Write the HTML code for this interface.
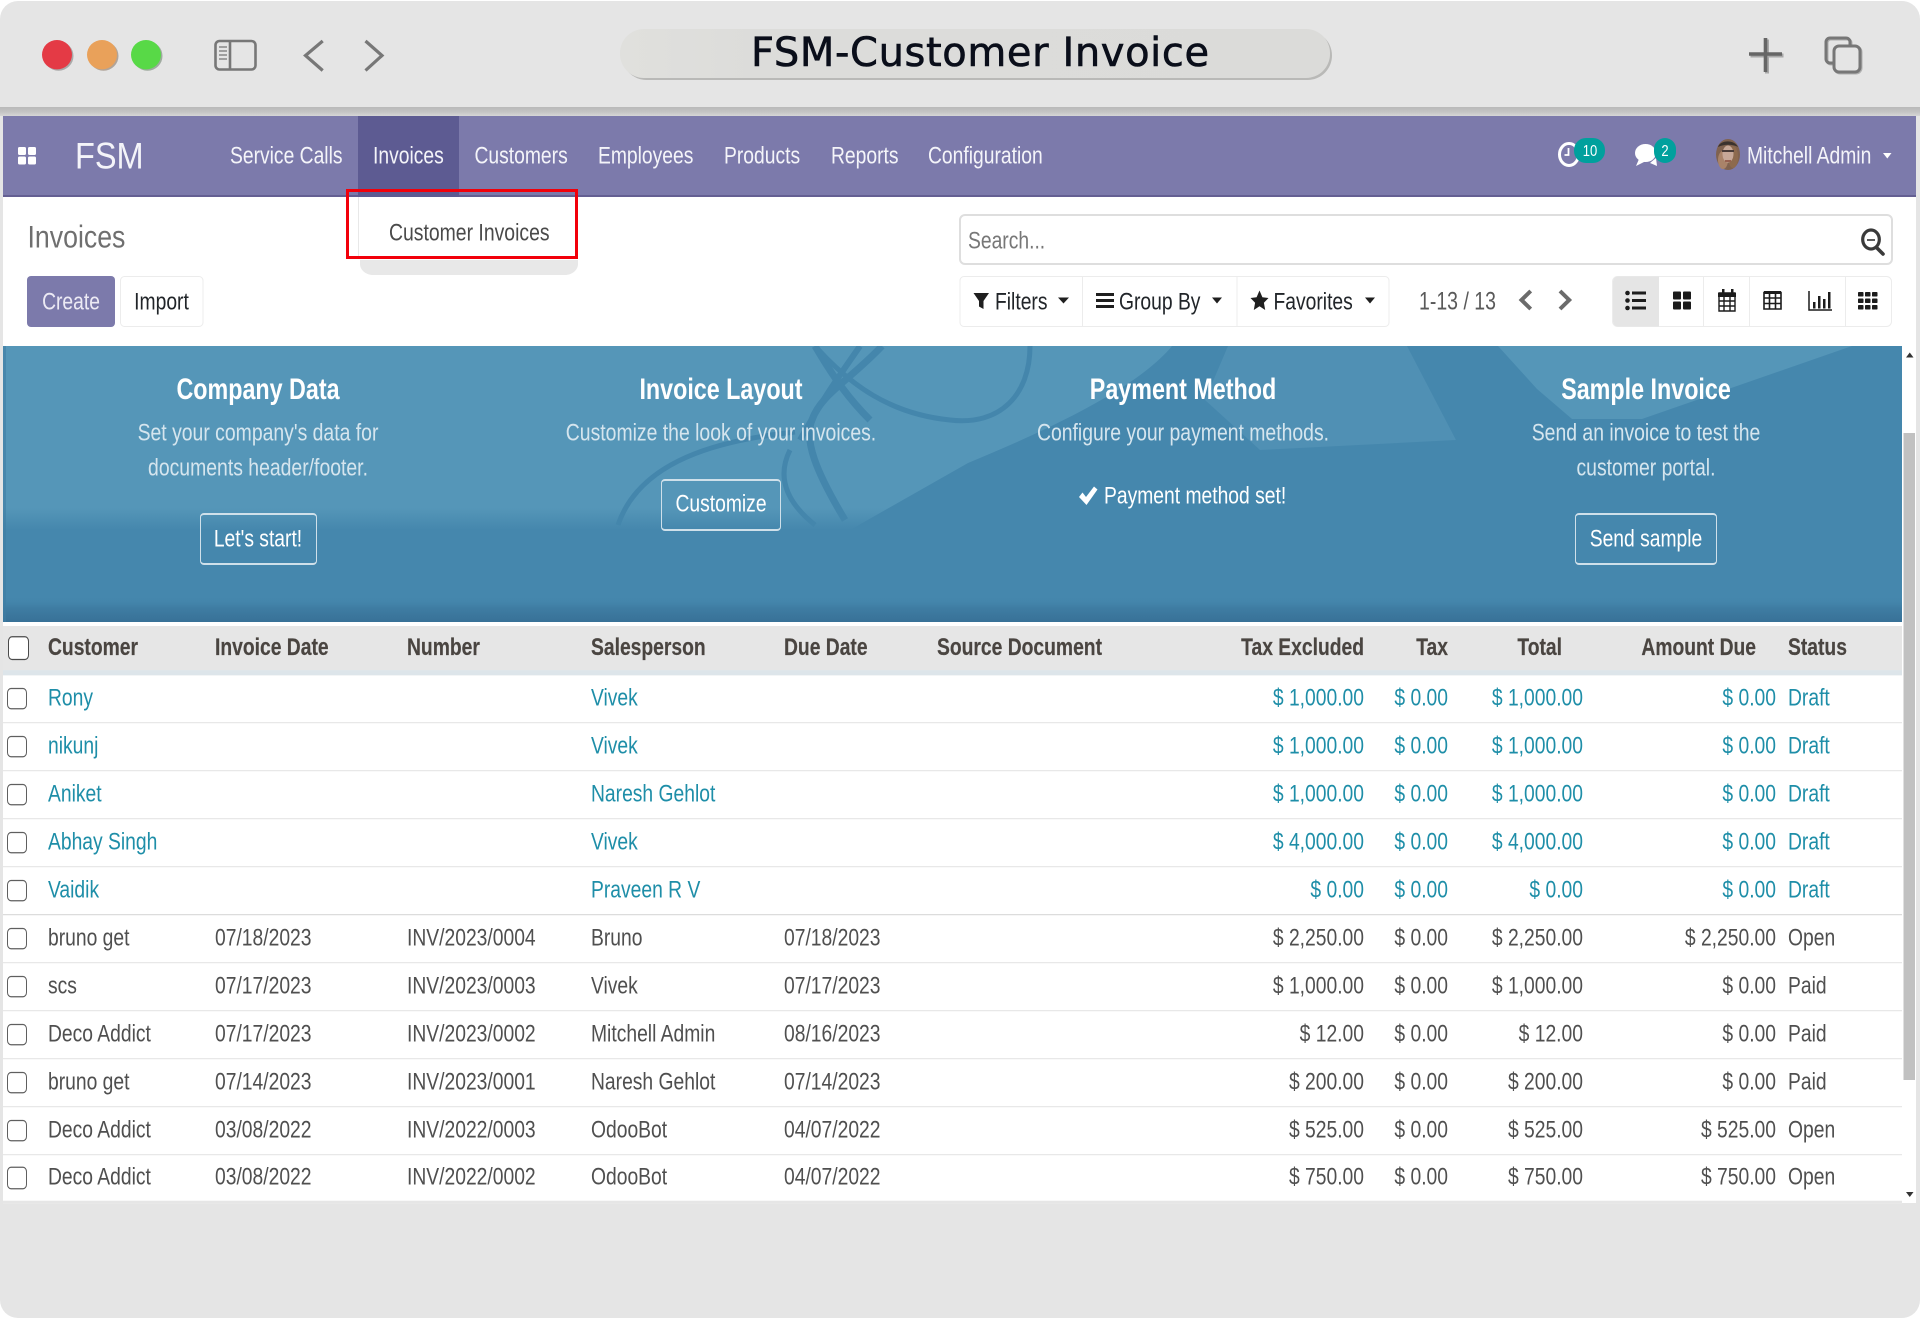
<!DOCTYPE html>
<html lang="en">
<head>
<meta charset="utf-8">
<title>FSM-Customer Invoice</title>
<style>
html,body{margin:0;padding:0;background:#fff;width:1920px;height:1320px;overflow:hidden}
body{position:relative;font-family:"Liberation Sans",sans-serif;color:#4c4c4c}
#win{position:absolute;left:0;top:1px;width:1920px;height:1317px;background:#e5e5e5;border-radius:18px}
svg.ov{position:absolute;left:0;top:0}
.t{position:absolute;white-space:nowrap;font-size:19.3px;line-height:24px;transform:scaleY(var(--s,1.263));transform-origin:0 50%}
.c{transform:translateX(-50%) scaleY(var(--s,1.263))}
.n{color:#f4f4f9}
.h{font-weight:bold;font-size:23.3px;color:#fff}
.p{color:#d5e5ee;font-size:19.4px}
.w{color:#fff}
.k{color:#212529}
.bb{position:absolute;box-sizing:border-box;border:1px solid #cfe0ea;border-top-width:2px;border-bottom-width:2px;border-radius:4px}
#tb{position:absolute;left:3px;top:625.5px;width:1899px;transform:scaleY(1.26316);transform-origin:0 0}
table{border-collapse:separate;border-spacing:0;table-layout:fixed;width:1899px;font-size:19.3px;background:#fff}
th,td{box-sizing:border-box;padding:0 8px;white-space:nowrap;overflow:hidden;text-align:left;vertical-align:middle;font-weight:normal}
th{height:39px;background:#e6e6e6;font-weight:bold;color:#4a4541;border-bottom:4px solid #dde5ea;-webkit-text-stroke:.15px #4a4541}
td{height:38px;border-bottom:1px solid #e8e8e8;color:#4f4f4f}
tr.l td{color:#1e8ea8}
tr:last-child td{border-bottom:2px solid #e6e6e6}
tr.e td{border-bottom-color:#dcdcdc}
th.r,td.r{text-align:right}
.cb{display:block;box-sizing:border-box;width:20px;height:17.4px;border:1.4px solid #5f5f5f;border-radius:4px;background:#fff}
th .cb{width:21px;height:19px;border-color:#4a4a4a;margin-left:.5px}
.am{padding-right:4px}
.ck{padding:0 0 0 4px}
</style>
</head>
<body>
<div id="win"></div>

<svg class="ov" width="1920" height="1320" viewBox="0 0 1920 1320">
<defs>
<linearGradient id="barg" x1="0" y1="0" x2="0" y2="1"><stop offset="0" stop-color="#b9b9b9"/><stop offset=".55" stop-color="#c4c4c4"/><stop offset="1" stop-color="#d6d6d6"/></linearGradient>
<linearGradient id="pill" x1="0" y1="0" x2="1" y2="0"><stop offset="0" stop-color="#e0e0dd"/><stop offset=".2" stop-color="#dcdcda"/><stop offset="1" stop-color="#dbdbd9"/></linearGradient>
<linearGradient id="bot" x1="0" y1="0" x2="0" y2="1"><stop offset="0" stop-color="#4587ad" stop-opacity="0"/><stop offset=".45" stop-color="#3f7da3"/><stop offset="1" stop-color="#387197"/></linearGradient>
<linearGradient id="fade" gradientUnits="userSpaceOnUse" x1="0" y1="346" x2="0" y2="530"><stop offset="0" stop-color="#5596b8"/><stop offset=".88" stop-color="#5596b8"/><stop offset="1" stop-color="#4587ad"/></linearGradient>
<clipPath id="bc"><rect x="3" y="346" width="1899" height="276"/></clipPath>
</defs>

<!-- window chrome -->
<rect x="0" y="107" width="1920" height="9" fill="url(#barg)"/>
<ellipse cx="58.5" cy="56" rx="15" ry="14.7" fill="#a9a9a9"/><ellipse cx="57" cy="54.7" rx="15" ry="14.7" fill="#e43a45"/>
<ellipse cx="103.5" cy="56" rx="15" ry="14.7" fill="#b0a49a"/><ellipse cx="102" cy="54.7" rx="15" ry="14.7" fill="#e9a15a"/>
<ellipse cx="147.5" cy="56" rx="15" ry="14.7" fill="#9fab9f"/><ellipse cx="146" cy="54.7" rx="15" ry="14.7" fill="#58d947"/>
<rect x="215.5" y="41" width="40" height="28.5" rx="4" fill="none" stroke="#777" stroke-width="2.6"/>
<path d="M230 41v28.5" stroke="#777" stroke-width="2.6"/>
<path d="M219 47h8M219 51h8M219 55h8M219 59h8" stroke="#888" stroke-width="1.6"/>
<path d="M322.7 41 305.5 55.5 322.7 70.5" fill="none" stroke="#777" stroke-width="3.2"/>
<path d="M365.5 41 382 55.5 365.5 70.5" fill="none" stroke="#777" stroke-width="3.2"/>
<rect x="622" y="31" width="710" height="49" rx="24.5" fill="#b9b9b7"/>
<rect x="620" y="29" width="710" height="49" rx="24" fill="url(#pill)"/>
<path d="M1749 54h33M1765.5 38v34" stroke="#a8a8a8" stroke-width="4" transform="translate(1.5 1.5)"/>
<path d="M1749 54h33M1765.5 38v34" stroke="#666" stroke-width="3.6"/>
<rect x="1827" y="39" width="24" height="25" rx="4" fill="none" stroke="#b0b0b0" stroke-width="3"/>
<rect x="1835" y="47" width="26" height="26" rx="5" fill="none" stroke="#b0b0b0" stroke-width="3"/>
<rect x="1826" y="38" width="24" height="25" rx="4" fill="none" stroke="#777" stroke-width="3"/>
<rect x="1834" y="46" width="26" height="26" rx="5" fill="#e5e5e5" stroke="#777" stroke-width="3"/>

<!-- app surfaces -->
<rect x="3" y="116" width="1913" height="230" fill="#fff"/>
<rect x="1902" y="346" width="14" height="857" fill="#fff"/>
<rect x="3" y="622" width="1899" height="4" fill="#fff"/>
<rect x="3" y="116" width="1913" height="81" fill="#7c7aab"/>
<rect x="3" y="195" width="1913" height="2" fill="#645f92"/>
<rect x="358" y="116" width="101" height="81" fill="#5d5b92"/>
<rect x="18" y="147" width="8" height="8" rx="1.5" fill="#fff"/><rect x="28" y="147" width="8" height="8" rx="1.5" fill="#fff"/>
<rect x="18" y="156.5" width="8" height="8" rx="1.5" fill="#fff"/><rect x="28" y="156.5" width="8" height="8" rx="1.5" fill="#fff"/>

<!-- systray -->
<ellipse cx="1569" cy="154.5" rx="9.5" ry="11" fill="none" stroke="#fff" stroke-width="3"/>
<path d="M1568.5 148v7h-4" fill="none" stroke="#fff" stroke-width="1.8"/>
<rect x="1574" y="138" width="31" height="25" rx="12" fill="#00a09d"/>
<ellipse cx="1645.5" cy="153" rx="10.5" ry="9" fill="#fff"/>
<path d="M1639 159 1636 166 1646 161Z" fill="#fff"/>
<path d="M1650 163 1657 166 1656 158Z" fill="#fff"/>
<rect x="1654" y="138" width="22" height="25" rx="11" fill="#00a09d"/>
<ellipse cx="1728" cy="154.5" rx="12" ry="15.5" fill="#80624f"/>
<ellipse cx="1723" cy="160" rx="5" ry="9" fill="#a98369"/>
<ellipse cx="1733" cy="157" rx="5" ry="11" fill="#8d6a4e"/>
<ellipse cx="1728" cy="154" rx="5.5" ry="8.5" fill="#c7a898"/>
<path d="M1718 147c2-7 16-8 20 0-5-3-14-3-20 0Z" fill="#3a322e"/>
<path d="M1722 151h12" stroke="#4a3c38" stroke-width="2"/>
<path d="M1725 161h6" stroke="#96604f" stroke-width="2"/>
<path d="M1883 153h8.5l-4.2 5.5Z" fill="#fff"/>

<!-- control panel -->
<rect x="358" y="197" width="1" height="62" fill="#e8e8e8"/>
<path d="M360 260H578V264C578 270 572 275 565 275H373C366 275 360 270 360 264Z" fill="#e8e8e8"/>
<rect x="347.5" y="190.5" width="229" height="67" fill="none" stroke="#f2000a" stroke-width="3"/>
<rect x="27" y="276" width="88" height="51" rx="4" fill="#7c7aab"/>
<rect x="120.5" y="276.5" width="82.5" height="50" rx="4" fill="#fff" stroke="#ececec"/>
<rect x="960" y="215" width="932" height="49" rx="5" fill="#fff" stroke="#dedede" stroke-width="2"/>
<ellipse cx="1871" cy="239.5" rx="8.3" ry="9.5" fill="none" stroke="#3a3a3a" stroke-width="3.2"/>
<path d="M1877 248 1883 254" stroke="#3a3a3a" stroke-width="3.6" stroke-linecap="round"/>
<path d="M1867 240h8" stroke="#4a4a4a" stroke-width="1.8"/>

<rect x="960" y="276.5" width="429" height="50" rx="4" fill="#fff" stroke="#ececec"/>
<path d="M1082.5 276.5v50M1237 276.5v50" stroke="#ececec"/>
<path d="M973.5 293H989L983.5 301V309L979 306.5V301Z" fill="#1f1f1f"/>
<path d="M1058 297.5h11l-5.5 6Z" fill="#1f1f1f"/>
<path d="M1096 294.5h18M1096 300.5h18M1096 306.5h18" stroke="#1f1f1f" stroke-width="3"/>
<path d="M1212 297.5h10l-5 6Z" fill="#1f1f1f"/>
<path d="M1259.5 290.5l2.9 6.8 6.1.7-4.6 4.8 1.3 7.2-5.700-3.800-5.700 3.800 1.300-7.200-4.600-4.800 6.100-.7Z" fill="#1f1f1f"/>
<path d="M1365 297.5h10l-5 6Z" fill="#1f1f1f"/>
<path d="M1530.7 291 1521.5 300 1530.7 309" fill="none" stroke="#6b6b6b" stroke-width="4"/>
<path d="M1560 291 1569.2 300 1560 309" fill="none" stroke="#6b6b6b" stroke-width="4"/>

<rect x="1612.5" y="276.5" width="279" height="50" rx="5" fill="#fff" stroke="#ececec"/>
<path d="M1613 281a5 5 0 0 1 4-4.500H1659V326.500H1617a5 5 0 0 1-4-4.500Z" fill="#e5e5e5"/>
<path d="M1703.5 276.5v50M1749.5 276.5v50M1845.5 276.5v50" stroke="#ececec"/>
<g fill="#1c1c1c">
<circle cx="1627.5" cy="293" r="2.3"/><circle cx="1627.5" cy="300.5" r="2.3"/><circle cx="1627.5" cy="308" r="2.3"/>
<rect x="1632" y="291.5" width="14" height="3"/><rect x="1632" y="299" width="14" height="3"/><rect x="1632" y="306.5" width="14" height="3"/>
<rect x="1673" y="291.5" width="8" height="8" rx="1"/><rect x="1683" y="291.5" width="8" height="8" rx="1"/>
<rect x="1673" y="301.5" width="8" height="8" rx="1"/><rect x="1683" y="301.5" width="8" height="8" rx="1"/>
<rect x="1722" y="289" width="2.5" height="5"/><rect x="1731" y="289" width="2.5" height="5"/>
<rect x="1718" y="293" width="18" height="4"/>
</g>
<path d="M1719 293h16v18h-16ZM1719 301h16M1719 306h16M1724 297v14M1730 297v14" fill="none" stroke="#1c1c1c" stroke-width="1.4"/>
<path d="M1764 292.5h17v16.500h-17ZM1764 298h17M1764 303.5h17M1769.5 292.5v16.500M1775.5 292.5v16.500" fill="none" stroke="#1c1c1c" stroke-width="1.6"/>
<path d="M1764 292.5h17" stroke="#1c1c1c" stroke-width="3"/>
<path d="M1809 291v19h23" fill="none" stroke="#1c1c1c" stroke-width="1.5"/>
<g fill="#1c1c1c"><rect x="1813" y="302" width="2.5" height="6.5"/><rect x="1818" y="296" width="2.5" height="12.5"/><rect x="1823" y="299" width="2.5" height="9.5"/><rect x="1828" y="292" width="2.5" height="16.5"/></g>
<g fill="#1c1c1c">
<rect x="1858" y="292" width="5.5" height="4.5" rx=".8"/><rect x="1865" y="292" width="5.5" height="4.5" rx=".8"/><rect x="1872" y="292" width="5.5" height="4.5" rx=".8"/>
<rect x="1858" y="298.5" width="5.5" height="4.5" rx=".8"/><rect x="1865" y="298.5" width="5.5" height="4.5" rx=".8"/><rect x="1872" y="298.5" width="5.5" height="4.5" rx=".8"/>
<rect x="1858" y="305" width="5.5" height="4.5" rx=".8"/><rect x="1865" y="305" width="5.5" height="4.5" rx=".8"/><rect x="1872" y="305" width="5.5" height="4.5" rx=".8"/>
</g>

<!-- banner -->
<g clip-path="url(#bc)">
<rect x="3" y="346" width="1899" height="276" fill="#4587ad"/>
<path d="M3 346H1172C1140 385 1060 425 968 463L850 530H3Z" fill="url(#fade)"/>
<path d="M1228 346H1407L1456 440 1260 450 1205 400Z" fill="#5090b4"/>
<path d="M1498 346H1852L1642 419H1572L1537 389Z" fill="#5596b8"/>
<g fill="none" stroke="#4486ac" stroke-width="6">
<path d="M1030 346C1030 395 1000 426 950 420 890 414 850 385 815 346" stroke-width="5"/>
<path d="M882 346C850 380 820 395 812 420 804 440 815 470 845 520" stroke-width="7"/>
<path d="M815 346C835 380 850 400 870 420" stroke-width="7"/>
<path d="M860 346C840 375 825 395 800 440" stroke-width="6"/>
<path d="M795 432C720 440 640 460 618 525" stroke-width="5"/>
<path d="M790 450C775 480 790 505 815 525" stroke-width="5"/>
</g>
<rect x="3" y="596" width="1899" height="26" fill="url(#bot)"/>
<rect x="3" y="346" width="3" height="276" fill="#3f7da3" opacity=".6"/>
</g>

<!-- scrollbar -->
<rect x="1903.5" y="433" width="11.5" height="647" fill="#c1c1c1"/>
<path d="M1906 357.5h7.5l-3.750-5Z" fill="#333"/>
<path d="M1906 1192h7.5l-3.750 5Z" fill="#333"/>

<!-- check mark -->
<path d="M1079 497 1082.5 492.5 1086 497 1094 486.5 1097.5 489.5 1086.5 505Z" fill="#fff"/>
</svg>

<!-- title -->
<span class="t" style="left:751px;top:40.5px;font-family:'DejaVu Sans',sans-serif;font-size:40px;letter-spacing:.6px;color:#0a0e1a;-webkit-text-stroke:.6px #0a0e1a;--s:1">FSM-Customer Invoice</span>

<!-- nav -->
<span class="t n" style="left:75px;top:144px;font-size:32.5px;--s:1.150">FSM</span>
<span class="t n" style="left:230px;top:145px">Service Calls</span>
<span class="t n" style="left:373px;top:145px">Invoices</span>
<span class="t n" style="left:474.5px;top:145px">Customers</span>
<span class="t n" style="left:598px;top:145px">Employees</span>
<span class="t n" style="left:724px;top:145px">Products</span>
<span class="t n" style="left:831px;top:145px">Reports</span>
<span class="t n" style="left:928px;top:145px">Configuration</span>
<span class="t c w" style="left:1590px;top:139px;font-size:13px;--s:1.200">10</span>
<span class="t c w" style="left:1665px;top:139px;font-size:13px;--s:1.200">2</span>
<span class="t n" style="left:1747px;top:145px">Mitchell Admin</span>

<!-- control panel text -->
<span class="t" style="left:27.5px;top:225px;font-size:26.7px;color:#6f6f6f;--s:1.180">Invoices</span>
<span class="t" style="left:389px;top:220.5px;font-size:19.4px;color:#4a4a4a">Customer Invoices</span>
<span class="t c" style="left:71px;top:290.5px;color:#eceaf4">Create</span>
<span class="t c k" style="left:161.5px;top:290.5px">Import</span>
<span class="t" style="left:968px;top:230.300px;color:#777">Search...</span>
<span class="t k" style="left:995px;top:290.5px">Filters</span>
<span class="t k" style="left:1119px;top:290.5px">Group By</span>
<span class="t k" style="left:1273.5px;top:290.5px">Favorites</span>
<span class="t" style="left:1419px;top:290px;font-size:19.5px;color:#5a5a5a">1-13 / 13</span>

<!-- banner text -->
<span class="t c h" style="left:258px;top:377.300px">Company Data</span>
<span class="t c p" style="left:258px;top:420.800px">Set your company's data for</span>
<span class="t c p" style="left:258px;top:455.500px">documents header/footer.</span>
<div class="bb" style="left:199.5px;top:513px;width:117px;height:52px"></div>
<span class="t c w" style="left:258px;top:527.800px">Let's start!</span>

<span class="t c h" style="left:721px;top:377.300px">Invoice Layout</span>
<span class="t c p" style="left:721px;top:420.800px">Customize the look of your invoices.</span>
<div class="bb" style="left:661px;top:479px;width:120px;height:52px"></div>
<span class="t c w" style="left:721px;top:493.300px">Customize</span>

<span class="t c h" style="left:1183px;top:377.300px">Payment Method</span>
<span class="t c p" style="left:1183px;top:420.800px">Configure your payment methods.</span>
<span class="t w" style="left:1104px;top:484.500px">Payment method set!</span>

<span class="t c h" style="left:1646px;top:377.300px">Sample Invoice</span>
<span class="t c p" style="left:1646px;top:420.800px">Send an invoice to test the</span>
<span class="t c p" style="left:1646px;top:455.500px">customer portal.</span>
<div class="bb" style="left:1575px;top:513px;width:142px;height:52px"></div>
<span class="t c w" style="left:1646px;top:527.800px">Send sample</span>

<!-- table -->
<div id="tb">
<table>
<colgroup><col style="width:37px"><col style="width:167px"><col style="width:192px"><col style="width:184px"><col style="width:193px"><col style="width:153px"><col style="width:201px"><col style="width:242px"><col style="width:84px"><col style="width:135px"><col style="width:189px"><col style="width:122px"></colgroup>
<thead><tr>
<th class="ck"><i class="cb"></i></th>
<th>Customer</th><th>Invoice Date</th><th>Number</th><th>Salesperson</th><th>Due Date</th><th>Source Document</th>
<th class="r" style="padding-left:0">Tax Excluded</th><th class="r" style="padding-left:0">Tax</th>
<th class="r" style="padding-right:29px">Total</th><th class="r" style="padding-right:24px">Amount Due</th><th>Status</th>
</tr></thead>
<tbody>
<tr class="l"><td class="ck"><i class="cb"></i></td><td>Rony</td><td></td><td></td><td>Vivek</td><td></td><td></td><td class="r">$&nbsp;1,000.00</td><td class="r">$&nbsp;0.00</td><td class="r">$&nbsp;1,000.00</td><td class="r am">$&nbsp;0.00</td><td>Draft</td></tr>
<tr class="l"><td class="ck"><i class="cb"></i></td><td>nikunj</td><td></td><td></td><td>Vivek</td><td></td><td></td><td class="r">$&nbsp;1,000.00</td><td class="r">$&nbsp;0.00</td><td class="r">$&nbsp;1,000.00</td><td class="r am">$&nbsp;0.00</td><td>Draft</td></tr>
<tr class="l"><td class="ck"><i class="cb"></i></td><td>Aniket</td><td></td><td></td><td>Naresh Gehlot</td><td></td><td></td><td class="r">$&nbsp;1,000.00</td><td class="r">$&nbsp;0.00</td><td class="r">$&nbsp;1,000.00</td><td class="r am">$&nbsp;0.00</td><td>Draft</td></tr>
<tr class="l"><td class="ck"><i class="cb"></i></td><td>Abhay Singh</td><td></td><td></td><td>Vivek</td><td></td><td></td><td class="r">$&nbsp;4,000.00</td><td class="r">$&nbsp;0.00</td><td class="r">$&nbsp;4,000.00</td><td class="r am">$&nbsp;0.00</td><td>Draft</td></tr>
<tr class="l e"><td class="ck"><i class="cb"></i></td><td>Vaidik</td><td></td><td></td><td>Praveen R V</td><td></td><td></td><td class="r">$&nbsp;0.00</td><td class="r">$&nbsp;0.00</td><td class="r">$&nbsp;0.00</td><td class="r am">$&nbsp;0.00</td><td>Draft</td></tr>
<tr><td class="ck"><i class="cb"></i></td><td>bruno get</td><td>07/18/2023</td><td>INV/2023/0004</td><td>Bruno</td><td>07/18/2023</td><td></td><td class="r">$&nbsp;2,250.00</td><td class="r">$&nbsp;0.00</td><td class="r">$&nbsp;2,250.00</td><td class="r am">$&nbsp;2,250.00</td><td>Open</td></tr>
<tr><td class="ck"><i class="cb"></i></td><td>scs</td><td>07/17/2023</td><td>INV/2023/0003</td><td>Vivek</td><td>07/17/2023</td><td></td><td class="r">$&nbsp;1,000.00</td><td class="r">$&nbsp;0.00</td><td class="r">$&nbsp;1,000.00</td><td class="r am">$&nbsp;0.00</td><td>Paid</td></tr>
<tr><td class="ck"><i class="cb"></i></td><td>Deco Addict</td><td>07/17/2023</td><td>INV/2023/0002</td><td>Mitchell Admin</td><td>08/16/2023</td><td></td><td class="r">$&nbsp;12.00</td><td class="r">$&nbsp;0.00</td><td class="r">$&nbsp;12.00</td><td class="r am">$&nbsp;0.00</td><td>Paid</td></tr>
<tr><td class="ck"><i class="cb"></i></td><td>bruno get</td><td>07/14/2023</td><td>INV/2023/0001</td><td>Naresh Gehlot</td><td>07/14/2023</td><td></td><td class="r">$&nbsp;200.00</td><td class="r">$&nbsp;0.00</td><td class="r">$&nbsp;200.00</td><td class="r am">$&nbsp;0.00</td><td>Paid</td></tr>
<tr><td class="ck"><i class="cb"></i></td><td>Deco Addict</td><td>03/08/2022</td><td>INV/2022/0003</td><td>OdooBot</td><td>04/07/2022</td><td></td><td class="r">$&nbsp;525.00</td><td class="r">$&nbsp;0.00</td><td class="r">$&nbsp;525.00</td><td class="r am">$&nbsp;525.00</td><td>Open</td></tr>
<tr><td class="ck"><i class="cb"></i></td><td>Deco Addict</td><td>03/08/2022</td><td>INV/2022/0002</td><td>OdooBot</td><td>04/07/2022</td><td></td><td class="r">$&nbsp;750.00</td><td class="r">$&nbsp;0.00</td><td class="r">$&nbsp;750.00</td><td class="r am">$&nbsp;750.00</td><td>Open</td></tr>
</tbody>
</table>
</div>
</body>
</html>
